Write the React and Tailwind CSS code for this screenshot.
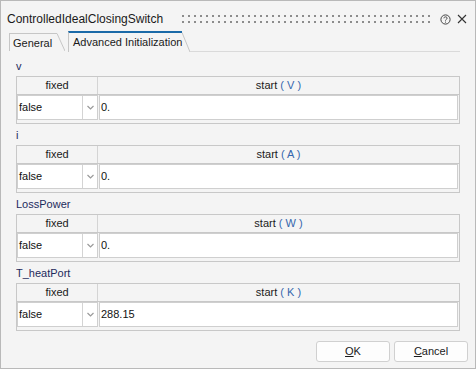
import React from "react";

const groups = [
  { name: "v", unit: "V", start: "0." },
  { name: "i", unit: "A", start: "0." },
  { name: "LossPower", unit: "W", start: "0." },
  { name: "T_heatPort", unit: "K", start: "288.15" },
];

function Dots() {
  return (
    <svg width="250" height="8" className="block">
      <defs>
        <pattern id="dp" width="6" height="6" patternUnits="userSpaceOnUse">
          <rect x="0" y="0" width="2" height="2" fill="#8c8c8c" />
        </pattern>
      </defs>
      <rect x="0" y="0" width="250" height="8" fill="url(#dp)" />
    </svg>
  );
}

function Slant({ h, top = 0 }) {
  return (
    <svg width="8" height={h} className="block shrink-0">
      <line x1="0" y1={top + 0.5} x2="8" y2={h} stroke="#c6c6c6" strokeWidth="1" />
    </svg>
  );
}

function Group({ g }) {
  return (
    <div className="flex flex-col">
      <div className="h-[13px] leading-[13px] text-[11px] text-[#1d2a5c]">{g.name}</div>
      <div className="mt-[3px] h-[48px] border border-[#c8c8c8] flex flex-col">
        <div className="h-[18px] flex border-b border-[#c8c8c8] text-[11px] text-[#1a1a1a]">
          <div className="w-[81px] border-r border-[#d4d4d4] flex items-center justify-center">fixed</div>
          <div className="flex-1 flex items-center justify-center whitespace-pre">
            start <span className="text-[#3566ad]">( {g.unit} )</span>
          </div>
        </div>
        <div className="h-[25px] flex">
          <div className="w-[81px] flex border border-[#cfcfcf] bg-white">
            <div className="flex-1 flex items-center pl-[1px] text-[11px] text-[#111]">false</div>
            <div className="w-[15px] border-l border-[#d4d4d4] flex items-center justify-center">
              <svg width="7" height="5" viewBox="0 0 7 5">
                <path d="M0.5 1 L3.5 4 L6.5 1" fill="none" stroke="#9a9a9a" strokeWidth="1.2" />
              </svg>
            </div>
          </div>
          <div className="w-[1px]" />
          <div className="flex-1 mr-[1px] border border-[#cfcfcf] bg-white flex items-center pl-[1px] text-[11px] text-[#111]">
            {g.start}
          </div>
        </div>
        <div className="h-[3px]" />
      </div>
    </div>
  );
}

export default function App() {
  return (
    <div
      className="w-[476px] h-[369px] border border-[#b9b9b9] bg-[#f4f4f4] flex flex-col text-[#1a1a1a]"
      style={{ fontFamily: '"Liberation Sans", Arial, sans-serif' }}
    >
      {/* title bar */}
      <div className="h-[30px] pt-[6px] flex items-center pl-[6px]">
        <div className="text-[12px] w-[175px] whitespace-nowrap">ControlledIdealClosingSwitch</div>
        <Dots />
        <div className="ml-[8px] flex items-center gap-[6px]">
          <svg width="11" height="11" viewBox="0 0 11 11">
            <circle cx="5.5" cy="5.5" r="4.6" fill="none" stroke="#444" strokeWidth="1" />
            <path d="M3.9 4.3 C3.9 2.4 7.1 2.4 7.1 4.2 C7.1 5.4 5.5 5.4 5.5 6.6" fill="none" stroke="#444" strokeWidth="1" />
            <rect x="5" y="7.6" width="1" height="1" fill="#444" />
          </svg>
          <svg width="10" height="10" viewBox="0 0 10 10">
            <path d="M1 1 L9 9 M9 1 L1 9" stroke="#333" strokeWidth="1.1" />
          </svg>
        </div>
      </div>

      {/* tabs */}
      <div className="h-[21px] flex items-end">
        <div className="ml-[8px] h-[18px] flex mb-[1px]">
          <div className="w-[48px] border-l border-t border-[#c6c6c6] pl-[3px] text-[11px] leading-[16px] pt-[1px] whitespace-nowrap">
            General
          </div>
          <Slant h={18} />
        </div>
        <div className="ml-[3px] h-[21px] flex">
          <div className="w-[114px] border-l border-[#c6c6c6] border-t-2 border-t-[#1b6aa8] pl-[4px] text-[11px] leading-[17px] pt-[1px] whitespace-nowrap">
            Advanced Initialization
          </div>
          <Slant h={21} top={1} />
        </div>
        <div className="flex-1 mr-[15px] border-b border-[#dadada]" />
      </div>

      {/* content */}
      <div className="flex-1 flex flex-col px-[15px] pt-[8px] gap-[5px]">
        {groups.map((g) => (
          <Group key={g.name} g={g} />
        ))}
      </div>

      {/* footer */}
      <div className="flex justify-end gap-[4px] pr-[7px] mb-[6px]">
        <button className="w-[74px] h-[21px] rounded-[3px] border border-[#d0d0d0] bg-[#fdfdfd] text-[11px] text-[#1a1a1a]">
          <span className="underline">O</span>K
        </button>
        <button className="w-[74px] h-[21px] rounded-[3px] border border-[#d0d0d0] bg-[#fdfdfd] text-[11px] text-[#1a1a1a]">
          <span className="underline">C</span>ancel
        </button>
      </div>
    </div>
  );
}
